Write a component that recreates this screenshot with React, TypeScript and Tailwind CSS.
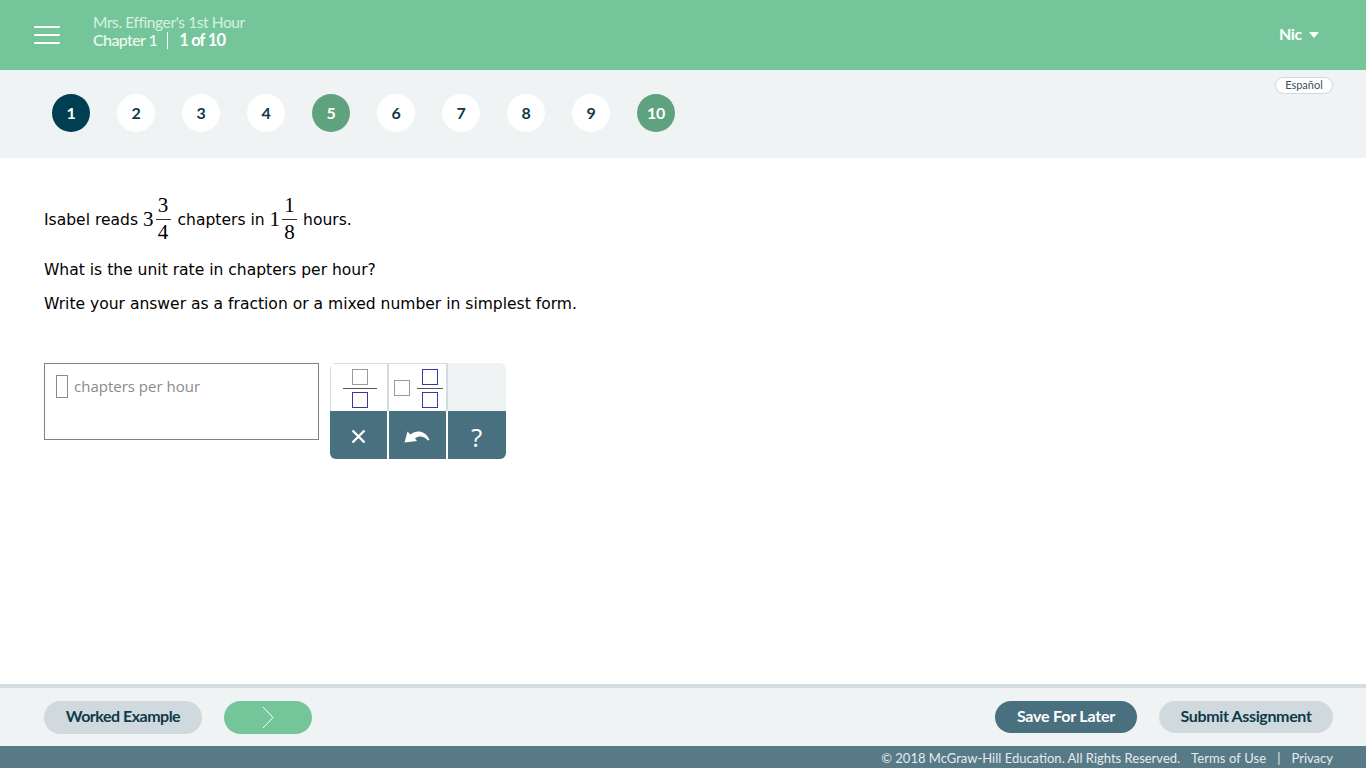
const STEPS = [1, 2, 3, 4, 5, 6, 7, 8, 9, 10]
const ANSWERED = [5, 10]

function Frac({ whole, top, bottom }: { whole: string; top: string; bottom: string }) {
  return (
    <span className="inline-flex items-center font-['Liberation_Serif',serif] text-[21px] ml-[5px] mr-[7px]">
      <span>{whole}</span>
      <span className="inline-flex flex-col items-center w-[15px] ml-[2px] leading-[24px]">
        <span className="h-[26px]">{top}</span>
        <span className="w-full h-px bg-[#333]" />
        <span className="h-[26px]">{bottom}</span>
      </span>
    </span>
  )
}

function Box({ blue }: { blue?: boolean }) {
  return <span className={blue ? 'block w-4 h-4 border border-[#3b35a8]' : 'block w-4 h-4 border border-[#9a9a9a]'} />
}

export default function App() {
  return (
    <div className="h-screen flex flex-col bg-white font-['Lato',sans-serif] overflow-hidden">
      {/* Header */}
      <header className="h-[70px] shrink-0 bg-[#74c69a] flex items-center justify-between pl-[34px] pr-[47px] text-white">
        <div className="flex items-center">
          <svg width="26" height="20" viewBox="0 0 26 20" stroke="currentColor" strokeWidth="2" strokeLinecap="round">
            <path d="M1 2h24M1 10h24M1 18h24" />
          </svg>
          <div className="ml-[33px] pb-[8px]">
            <p className="text-[15.5px] leading-[18px] text-[#d8f0e2] tracking-[-0.4px]">Mrs. Effinger's 1st Hour</p>
            <p className="flex items-center text-[16px] leading-[18px] tracking-[-0.6px]">
              <span className="font-medium text-[#eef9f2]">Chapter 1</span>
              <span className="w-px h-[17px] bg-white mx-[10px]" />
              <span className="font-bold text-[16.5px] tracking-[-0.8px] ml-[1px]">1 of 10</span>
            </p>
          </div>
        </div>
        <div className="flex items-center gap-[7px] text-[16px] font-bold tracking-[-0.3px] pb-[2px]">
          Nic
          <span className="w-0 h-0 border-l-[5.5px] border-r-[5.5px] border-t-[6px] border-l-transparent border-r-transparent border-t-white mt-[1px]" />
        </div>
      </header>

      {/* Question nav */}
      <nav className="h-[88px] shrink-0 bg-[#eff3f4] flex justify-between pl-[52px] pr-[33px]">
        <div className="flex items-center gap-[27px] pb-[2px]">
          {STEPS.map((n) => {
            const cls =
              n === 1
                ? 'bg-[#003e52] text-white'
                : ANSWERED.includes(n)
                  ? 'bg-[#5fa27e] text-white'
                  : 'bg-white text-[#0e3a4a]'
            return (
              <span key={n} className={`w-[38px] h-[38px] rounded-full flex items-center justify-center text-[16px] font-bold tracking-[-0.3px] ${cls}`}>
                {n}
              </span>
            )
          })}
        </div>
        <span className="mt-[7px] h-[17px] w-[58px] rounded-full bg-white border border-[#cfd8db] text-[11px] leading-[14px] text-center text-[#3c4f57]">
          Español
        </span>
      </nav>

      {/* Question body */}
      <main className="flex-1 pl-[44px] pt-[33px] text-black font-['DejaVu_Sans',sans-serif] text-[15.56px]">
        <p className="flex items-center h-[57px] whitespace-pre">
          <span className="pt-[2px]">Isabel reads</span>
          <Frac whole="3" top="3" bottom="4" />
          <span className="pt-[2px]">chapters in</span>
          <Frac whole="1" top="1" bottom="8" />
          <span className="pt-[2px] -ml-[1px]">hours.</span>
        </p>
        <p className="mt-[10px] leading-[24px]">What is the unit rate in chapters per hour?</p>
        <p className="mt-[10px] leading-[24px]">Write your answer as a fraction or a mixed number in simplest form.</p>

        <div className="mt-[47px] flex items-start gap-[11px]">
          <div className="w-[275px] h-[77px] border border-[#808080] flex items-start pl-[11px] pt-[11px]">
            <span className="w-[12px] h-[23px] border border-[#8a8a8a]" />
            <span className="ml-[6px] mt-[1px] font-['Open_Sans',sans-serif] text-[15px] leading-[20px] text-[#8a8a8a]">chapters per hour</span>
          </div>

          <div className="w-[176px] h-[96px] grid grid-cols-[59px_59px_58px] grid-rows-2 rounded-[6px] overflow-hidden bg-[#eff3f4]">
            <div className="bg-white border-t border-l border-r-2 border-[#d3dcdf] flex flex-col items-center justify-center gap-[3px] pl-[1px] pt-[1px]">
              <Box />
              <span className="w-[34px] h-px bg-[#555]" />
              <Box blue />
            </div>
            <div className="bg-white border-t border-r-2 border-[#d3dcdf] flex items-center pl-[5px] gap-[7px]">
              <Box />
              <span className="flex flex-col items-center gap-[3px] pt-[1px]">
                <Box blue />
                <span className="w-[26px] h-px bg-[#555]" />
                <Box blue />
              </span>
            </div>
            <div />
            <div className="bg-[#48707f] flex items-center justify-center text-white border-r-2 border-white pt-[3px]">
              <svg width="15" height="15" viewBox="0 0 15 15" stroke="currentColor" strokeWidth="2.4">
                <path d="M1.5 1.5l12 12M13.5 1.5l-12 12" />
              </svg>
            </div>
            <div className="bg-[#48707f] flex items-center justify-center text-white border-r-2 border-white pt-[3px] pr-[1px]">
              <svg width="26" height="13" viewBox="0 0 26 13" fill="currentColor">
                <path d="M0.5 12.5 L3.5 1.5 L6.5 4.5 C12 0 21 0 25.5 10 L24 10.5 C20 6 15 5.5 11 8.5 L13 11 Z" />
              </svg>
            </div>
            <div className="bg-[#48707f] flex items-center justify-center text-white pt-[3px] pr-[1px]">
              <span className="font-['Open_Sans',sans-serif] font-medium text-[26px] leading-none">?</span>
            </div>
          </div>
        </div>
      </main>

      {/* Action bar */}
      <div className="h-[62px] shrink-0 bg-[#eff3f4] border-t-4 border-[#d3dcdf] flex items-center justify-between pr-[33px] pl-[44px] text-[16px] font-bold">
        <div className="flex items-center gap-[22px]">
          <button className="w-[158px] h-[33px] rounded-full bg-[#d0dade] text-[#0e3a4a] pb-[2px] tracking-[-0.5px]">Worked Example</button>
          <button className="w-[88px] h-[33px] rounded-full bg-[#74c69a] flex items-center justify-center text-white">
            <svg width="12" height="23" viewBox="0 0 12 23" fill="none" stroke="currentColor" strokeWidth="1">
              <path d="M1 1l10 10.5L1 22" />
            </svg>
          </button>
        </div>
        <div className="flex items-center gap-[22px]">
          <button className="w-[142px] h-[32px] rounded-full bg-[#48707f] text-white pb-[2px] tracking-[-0.2px]">Save For Later</button>
          <button className="w-[174px] h-[32px] rounded-full bg-[#d0dade] text-[#0e3a4a] pb-[2px] tracking-[-0.35px]">Submit Assignment</button>
        </div>
      </div>

      {/* Footer */}
      <footer className="h-[22px] shrink-0 bg-[#587a86] flex items-center justify-end pr-[33px] pt-[4px] text-[13px] text-[#e4ecee]">
        <span>© 2018 McGraw-Hill Education. All Rights Reserved.</span>
        <span className="ml-[11px] tracking-[0.1px]">Terms of Use</span>
        <span className="ml-[11px] mr-[11px]">|</span>
        <span>Privacy</span>
      </footer>
    </div>
  )
}
